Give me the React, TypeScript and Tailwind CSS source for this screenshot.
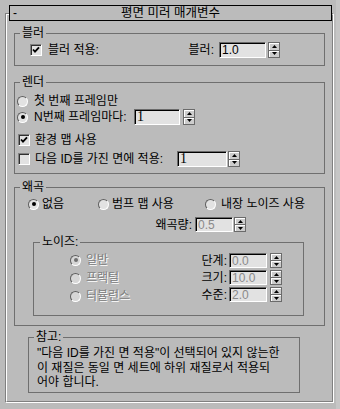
import type { ReactNode } from 'react';

const DIS = 'text-[#808080] [text-shadow:1px_1px_0_#ffffff]';

function Check({ checked }: { checked?: boolean }): JSX.Element {
  return (
    <span className="flex h-[12px] w-[12px] shrink-0 items-center justify-center border border-t-[#808080] border-l-[#808080] border-r-white border-b-white bg-[#e2e2e2] shadow-[inset_1px_1px_0_#303030]">
      {checked && (
        <svg width="8" height="8" viewBox="0 0 8 8">
          <path d="M1 3.5 L3 5.7 L7 1.3" stroke="#000" strokeWidth="1.8" fill="none" />
        </svg>
      )}
    </span>
  );
}

function Radio({ on, disabled }: { on?: boolean; disabled?: boolean }): JSX.Element {
  return (
    <span
      className={`flex h-[11px] w-[11px] shrink-0 items-center justify-center rounded-full border border-t-[#5e5e5e] border-l-[#5e5e5e] border-r-white border-b-white ${
        disabled ? 'bg-[#d6d6d6]' : 'bg-[#e2e2e2]'
      }`}
    >
      {on && <span className={`h-[4px] w-[4px] rounded-full ${disabled ? 'bg-[#707070]' : 'bg-black'}`} />}
    </span>
  );
}

function Edit({ value, className, disabled, serif }: { value: string; className: string; disabled?: boolean; serif?: boolean }): JSX.Element {
  return (
    <div
      className={`flex items-center border border-t-[#6a6a6a] border-l-[#6a6a6a] border-r-white border-b-white bg-[#e2e2e2] pl-[2px] shadow-[inset_1px_1px_0_#000] ${className}`}
    >
      <span
        className={`${disabled ? 'text-[#8a8a8a]' : 'text-black'} ${
          serif ? "[font-family:'Liberation_Serif',serif] text-[14px]" : 'text-[12px]'
        } leading-none`}
      >
        {value}
      </span>
    </div>
  );
}

function Spinner({ className }: { className: string }): JSX.Element {
  return (
    <div className={`flex w-[12px] shrink-0 flex-col border border-[#6a6a6a] bg-[#cdcdcd] ${className}`}>
      <div className="flex flex-1 items-center justify-center border-b border-[#6a6a6a] shadow-[inset_1px_1px_0_#ffffff]">
        <svg width="5" height="3" viewBox="0 0 5 3">
          <path d="M2.5 0 L5 3 L0 3 Z" fill="#000" />
        </svg>
      </div>
      <div className="flex flex-1 items-center justify-center shadow-[inset_1px_1px_0_#ffffff]">
        <svg width="5" height="3" viewBox="0 0 5 3">
          <path d="M0 0 L5 0 L2.5 3 Z" fill="#000" />
        </svg>
      </div>
    </div>
  );
}

function Group({ label, className, legendClass, children }: { label: string; className: string; legendClass: string; children: ReactNode }): JSX.Element {
  return (
    <fieldset className={`shrink-0 border border-[#6f6f6f] ${className}`}>
      <legend className={`h-[12px] px-[2px] leading-[12px] ${legendClass}`}>{label}</legend>
      {children}
    </fieldset>
  );
}

export default function App(): JSX.Element {
  return (
    <div className="flex h-[409px] w-[340px] overflow-hidden bg-[#bbbbbb] text-[12px] leading-[14px] text-black [font-family:'Liberation_Sans','Noto_Sans_CJK_KR',sans-serif]">
      <div className="flex-1 pt-[13px] pl-[5px] pr-[2px]">
        {/* rollout frame */}
        <div className="h-[390px] border border-t-[#808080] border-l-[#808080] border-r-white border-b-white">
          <div className="flex h-full flex-col border border-t-white border-l-white border-r-[#808080] border-b-[#808080]">
            {/* Title bar */}
            <div className="-mt-[10px] ml-[2px] grid h-[16px] shrink-0 grid-cols-[1fr_auto_1fr] items-center border border-black bg-[#bbbbbb]">
              <span className="pl-[3px] leading-none">-</span>
              <span className="text-[12.5px] leading-none">평면 미러 매개변수</span>
              <span />
            </div>

            {/* Blur */}
            <Group label="블러" className="mx-[7px] mt-[6px] h-[39px]" legendClass="ml-[5px]">
              <div className="mt-[3px] flex h-[16px] items-center">
                <span className="ml-[15px]">
                  <Check checked />
                </span>
                <span className="ml-[6px] whitespace-nowrap">블러 적용:</span>
                <div className="ml-auto mr-[44px] flex items-center">
                  <span>블러:</span>
                  <Edit value="1.0" className="ml-[5px] h-[16px] w-[47px]" />
                  <Spinner className="ml-[2px] h-[16px]" />
                </div>
              </div>
            </Group>

            {/* Render */}
            <Group label="렌더" className="mx-[7px] mt-[10px] h-[98px]" legendClass="ml-[5px]">
              <div className="mt-[6px] flex h-[14px] items-center pl-[2px]">
                <Radio />
                <span className="ml-[6px] whitespace-nowrap">첫 번째 프레임만</span>
              </div>
              <div className="mt-[1px] flex h-[16px] items-center pl-[2px]">
                <Radio on />
                <span className="ml-[6px] w-[100px] whitespace-nowrap">N번째 프레임마다:</span>
                <Edit value="1" serif className="h-[16px] w-[46px]" />
                <Spinner className="ml-[3px] h-[16px]" />
              </div>
              <div className="mt-[7px] flex h-[16px] items-center pl-[3px]">
                <Check checked />
                <span className="ml-[5px] whitespace-nowrap">환경 맵 사용</span>
              </div>
              <div className="mt-[3px] flex h-[16px] items-center pl-[3px]">
                <Check />
                <span className="ml-[5px] w-[142px] whitespace-nowrap">다음 ID를 가진 면에 적용:</span>
                <Edit value="1" serif className="h-[16px] w-[50px]" />
                <Spinner className="ml-[1px] h-[16px]" />
              </div>
            </Group>

            {/* Distortion */}
            <Group label="왜곡" className="mx-[7px] mt-[7px] h-[145px]" legendClass="ml-[5px]">
              <div className="mt-[4px] flex h-[14px] items-center">
                <div className="ml-[13px] flex w-[70px] items-center">
                  <Radio on />
                  <span className="ml-[3px]">없음</span>
                </div>
                <div className="flex w-[107px] items-center">
                  <Radio />
                  <span className="ml-[3px] whitespace-nowrap">범프 맵 사용</span>
                </div>
                <div className="flex items-center">
                  <Radio />
                  <span className="ml-[5px] whitespace-nowrap">내장 노이즈 사용</span>
                </div>
              </div>
              <div className="mt-[6px] flex h-[15px] items-center">
                <span className="w-[177px] text-right">왜곡량:</span>
                <Edit value="0.5" disabled className="ml-[3px] h-[15px] w-[38px]" />
                <Spinner className="ml-[1px] h-[15px]" />
              </div>

              <Group label="노이즈:" className="mt-[4px] ml-[18px] mr-[20px] h-[80px]" legendClass="ml-[6px]">
                <div className="mt-[5px] flex">
                  <div className="ml-[36px] flex flex-col gap-[4px]">
                    {['일반', '프랙털', '터뷸런스'].map((t, i) => (
                      <div key={t} className="flex h-[14px] items-center">
                        <Radio disabled on={i === 0} />
                        <span className={`ml-[5px] ${DIS}`}>{t}</span>
                      </div>
                    ))}
                  </div>
                  <div className="mr-[21px] ml-auto flex flex-col gap-[2px]">
                    {[
                      ['단계:', '0.0'],
                      ['크기:', '10.0'],
                      ['수준:', '2.0'],
                    ].map(([l, v]) => (
                      <div key={l} className="flex h-[15px] items-center">
                        <span>{l}</span>
                        <Edit value={v} disabled className="ml-[2px] h-[15px] w-[38px]" />
                        <Spinner className="ml-[3px] h-[15px]" />
                      </div>
                    ))}
                  </div>
                </div>
              </Group>
            </Group>

            {/* Note */}
            <Group label="참고:" className="mt-[5px] ml-[21px] mr-[32px] h-[62px]" legendClass="ml-[5px]">
              <p className="mt-[3px] whitespace-nowrap pl-[8px] leading-[14.5px]">
                "다음 ID를 가진 면 적용"이 선택되어 있지 않는한
                <br />
                이 재질은 동일 면 세트에 하위 재질로서 적용되
                <br />
                어야 합니다.
              </p>
            </Group>
          </div>
        </div>
      </div>
      <div className="w-[4px] bg-[#c6c6c6]" />
    </div>
  );
}
